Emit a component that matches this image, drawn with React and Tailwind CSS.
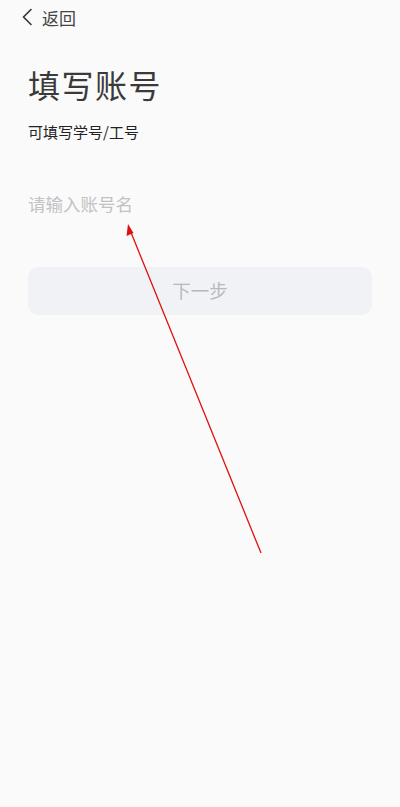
import React, { useState } from "react";

const font = { fontFamily: '"Noto Sans CJK SC", "Noto Sans", sans-serif' };

const App = () => {
  const [account, setAccount] = useState("");

  return (
    <div
      className="relative min-h-[807px] w-full bg-[#fafafa] text-[#333333]"
      style={font}
    >
      {/* top bar */}
      <div className="flex h-[34px] items-center pl-[20px]">
        <svg width="14" height="18" viewBox="0 0 14 18" className="mr-[8px]">
          <path
            d="M11 1.5 L3.5 9 L11 16.5"
            fill="none"
            stroke="#333333"
            strokeWidth="1.6"
            strokeLinecap="round"
            strokeLinejoin="round"
          />
        </svg>
        <span className="text-[17px] leading-none text-[#444444]">返回</span>
      </div>

      <div className="px-[28px]">
        <h1 className="mt-[32px] text-[32px] font-normal leading-[36px] tracking-[1.5px] text-[#3a3a3a]">
          填写账号
        </h1>
        <p className="mt-[20px] text-[15px] leading-[20px] text-[#222222]">
          可填写学号/工号
        </p>

        <input
          value={account}
          onChange={(e) => setAccount(e.target.value)}
          placeholder="请输入账号名"
          className="mt-[49px] h-[26px] w-full bg-transparent text-[17.5px] outline-none placeholder:text-[#c2c2c4]"
        />

        <button
          disabled={!account}
          className="mt-[50px] flex h-[48px] w-full items-center justify-center rounded-[10px] bg-[#f1f2f6] text-[18.5px] text-[#b9b9bd]"
        >
          下一步
        </button>
      </div>

      {/* red annotation arrow */}
      <svg
        className="pointer-events-none absolute left-0 top-0"
        width="400"
        height="807"
      >
        <line x1="261" y1="553" x2="130" y2="230" stroke="#e01010" strokeWidth="1.3" />
        <polygon points="128,224 126.5,236 133.5,233" fill="#e01010" />
      </svg>
    </div>
  );
};

export default App;
